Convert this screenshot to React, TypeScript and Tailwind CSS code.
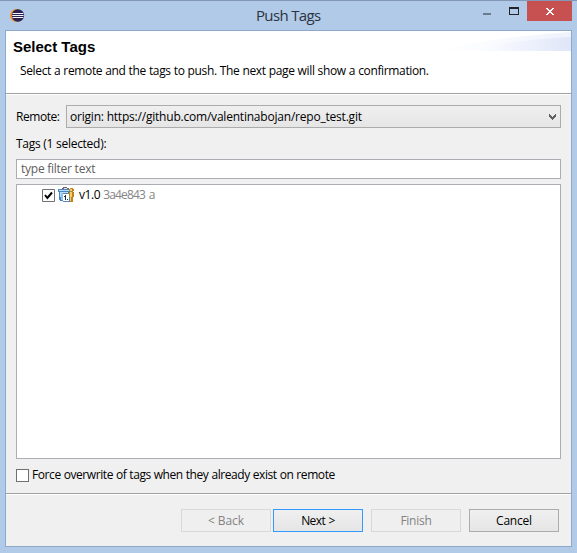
import type { ReactNode } from "react";

function EclipseLogo() {
  return (
    <svg className="ml-[10px] mt-[8px] h-[15px] w-[15px] shrink-0" viewBox="0 0 15 15">
      <circle cx="6.4" cy="6.5" r="6.4" fill="#f79422" />
      <circle cx="7.9" cy="6.5" r="6.2" fill="#2c2255" />
      <path d="M2.5 4.5h10.8M2.2 6.5h11.4M2.5 8.5h10.8" stroke="#f4f4fa" strokeWidth="1" />
    </svg>
  );
}

function TagIcon() {
  return (
    <svg className="ml-[3px] h-[16px] w-[17px]" viewBox="0 0 17 16" shapeRendering="crispEdges">
      <path d="M4 1h1v-1h4v1h2v1h-7z" fill="#805e70" />
      <path d="M6 1h3v1h-3z" fill="#dbe8f5" />
      <path d="M0 2h12v3h-1v9h-9v-1h-1v-8h-1z" fill="#4a86c2" />
      <path d="M1 3h10v1h-10zM2 5h8v8h-7v-3h-1z" fill="#b5dcf8" />
      <path d="M3 6h2v7h-2z" fill="#8fc3ec" />
      <path d="M5 6h7v9h-7z" fill="#5b82b0" />
      <path d="M5 7h6v7h-6z" fill="#ffffff" />
      <path d="M7 8h1v5h-1zM6 9h1v1h-1zM9 12h1v1h-1z" fill="#172d50" />
      <path d="M12 1h3v1h1v2h-1v1h1v5h-1v5h-3v-5h-1v-5h1v-1h-1v-2h1z" fill="#bd831c" />
      <path d="M12 2h2v2h-2zM12 5h2v5h-1v4h-1z" fill="#f4cf67" />
    </svg>
  );
}

function PushButton({ children, className }: { children: ReactNode; className: string }) {
  return (
    <button className={`h-[23px] w-[90px] border text-center leading-[21px] ${className}`}>{children}</button>
  );
}

export default function App() {
  return (
    <div className="flex h-[553px] w-[577px] flex-col overflow-hidden border-t border-[#8497b5] bg-[#b0cae8] font-['Open_Sans','Noto_Sans',sans-serif] text-[12px] text-black">
      <header className="flex h-[29px] shrink-0 items-start">
        <EclipseLogo />
        <h1 className="ml-[231px] mt-[4px] w-[100px] whitespace-nowrap text-[15px] leading-[20px] tracking-[-0.65px] text-[#2c3340]">Push Tags</h1>
        <div className="ml-auto mr-[5px] flex items-start">
          <svg className="h-[20px] w-[45px]" viewBox="0 0 45 20" shapeRendering="crispEdges">
            <path d="M1 12h8v2h-8z" fill="#6b7c91" />
            <path fillRule="evenodd" d="M27 6h10v8h-10zM28 8v5h8v-5z" fill="#222428" />
          </svg>
          <svg className="h-[20px] w-[45px] bg-[#c75050]" viewBox="0 0 45 20" shapeRendering="crispEdges">
            <path d="M19 7h2v1h1v1h2v-1h1v-1h2v1h-1v1h-1v1h-1v1h1v1h1v1h1v1h-2v-1h-1v-1h-2v1h-1v1h-2v-1h1v-1h1v-1h1v-1h-1v-1h-1v-1h-1z" fill="#ffffff" />
          </svg>
        </div>
      </header>

      <main className="mx-[5px] flex h-[517px] w-[567px] shrink-0 flex-col border border-[#8da8c8] bg-[#f0f0f0]">
        <section className="flex h-[62px] shrink-0 justify-between bg-white">
          <div className="w-[425px] whitespace-nowrap">
            <h2 className="pl-[7px] pt-[7px] font-['Liberation_Sans',Arial,sans-serif] text-[15px] font-bold leading-[18px]">Select Tags</h2>
            <p className="pl-[14px] pt-[7px] leading-[16px] tracking-[-0.36px] [word-spacing:0.3px]">Select a remote and the tags to push. The next page will show a confirmation.</p>
          </div>
          <svg className="h-[20px] w-[140px] shrink-0" viewBox="0 0 140 20">
            <defs>
              <linearGradient id="swoosh"><stop stopColor="#fff" /><stop offset="0.3" stopColor="#f8faff" /><stop offset="1" stopColor="#dfe6f8" /></linearGradient>
              <linearGradient id="glow"><stop stopColor="#fff" /><stop offset="0.4" stopColor="#fafcff" /><stop offset="1" stopColor="#eef2fc" /></linearGradient>
            </defs>
            <path d="M0 20Q70 5 140 1V20z" fill="url(#glow)" />
            <path d="M30 20Q90 8 140 6V20z" fill="url(#swoosh)" />
          </svg>
        </section>
        <div className="h-[2px] shrink-0 border-b border-t border-b-white border-t-[#a0a0a0]" />

        <section className="flex h-[398px] shrink-0 flex-col px-[10px] pt-[10px]">
          <div className="flex h-[23px] shrink-0 items-center">
            <label className="w-[50px] whitespace-nowrap tracking-[-0.45px]">Remote:</label>
            <div className="flex h-[23px] w-[495px] items-center justify-between border border-[#acacac] bg-gradient-to-b from-[#f0f0f0] to-[#e5e5e5] pl-[3px] pr-[3px]">
              <span className="whitespace-nowrap tracking-[-0.21px]">origin: https://github.com/valentinabojan/repo_test.git</span>
              <svg className="h-[7px] w-[8px]" viewBox="0 0 8 7" shapeRendering="crispEdges">
                <path d="M0 1h1v1h1v1h1v1h1v-1h1v-1h1v-1h1v3h-1v1h-1v1h-1v1h-1v-1h-1v-1h-1v-1h-1z" fill="#606060" />
              </svg>
            </div>
          </div>
          <div className="mt-[8px] h-[16px] shrink-0 leading-[16px] tracking-[-0.27px]">Tags (1 selected):</div>
          <div className="mt-[7px] h-[20px] shrink-0 border border-[#abadb3] bg-white pl-[4px] leading-[18px] tracking-[-0.25px] text-[#606060]">type filter text</div>
          <div className="mt-[5px] h-[275px] shrink-0 border border-[#abadb3] bg-white">
            <div className="ml-[25px] mt-[1px] flex h-[18px] items-center">
              <svg className="h-[13px] w-[13px]" viewBox="0 0 13 13">
                <path d="M.5 .5h12v12h-12z" fill="#fff" stroke="#707070" />
                <path d="M3 6l2.4 3L10 3.5" fill="none" stroke="#000" strokeWidth="2" />
              </svg>
              <TagIcon />
              <span className="ml-[4px] tracking-[-0.4px]">v1.0</span>
              <span className="ml-[3px] tracking-[-0.85px] text-[#858585] [word-spacing:1.5px]">3a4e843 a</span>
            </div>
          </div>
          <label className="mt-[7px] flex h-[18px] shrink-0 items-center">
            <span className="h-[13px] w-[13px] border border-[#707070] bg-white" />
            <span className="ml-[3px] whitespace-nowrap tracking-[-0.42px] [word-spacing:0.25px]">Force overwrite of tags when they already exist on remote</span>
          </label>
        </section>

        <div className="h-[2px] shrink-0 border-b border-t border-b-white border-t-[#a0a0a0]" />
        <footer className="flex justify-end pr-[12px] pt-[14px]">
          <PushButton className="border-[#d9d9d9] bg-[#efefef] tracking-[-0.1px] text-[#838383]">&lt; Back</PushButton>
          <PushButton className="ml-[2px] border-[#3399ff] bg-gradient-to-b from-[#f0f0f0] to-[#e5e5e5] tracking-[-0.6px] [word-spacing:1px]">Next &gt;</PushButton>
          <PushButton className="ml-[8px] border-[#d9d9d9] bg-[#efefef] tracking-[-0.25px] text-[#838383]">Finish</PushButton>
          <PushButton className="ml-[8px] border-[#acacac] bg-gradient-to-b from-[#f0f0f0] to-[#e5e5e5] tracking-[-0.2px]">Cancel</PushButton>
        </footer>
      </main>
    </div>
  );
}
